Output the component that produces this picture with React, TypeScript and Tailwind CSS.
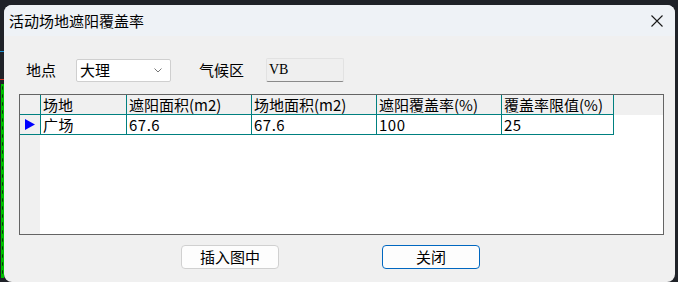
const columns = [
    { w: 'w-[86px]', head: '场地', val: '广场' },
    { w: 'w-[125px]', head: '遮阳面积(m2)', val: '67.6' },
    { w: 'w-[125px]', head: '场地面积(m2)', val: '67.6' },
    { w: 'w-[125px]', head: '遮阳覆盖率(%)', val: '100' },
    { w: 'w-[112px]', head: '覆盖率限值(%)', val: '25' },
]

const App: React.FC = () => {
    return (
        <div className="w-[678px] h-[282px] overflow-hidden bg-[#1f2228] flex font-['Noto_Sans_CJK_SC',sans-serif] text-black">
            {/* desktop behind the dialog */}
            <div className="w-[4px] flex flex-col">
                <div className="h-[51px]" />
                <div className="h-[1px] bg-[#1e8fd0]" />
                <div className="h-[27px]" />
                <div className="h-[1px] bg-[#d23a2a]" />
                <div className="h-[4px]" />
                <div className="ml-[1px] h-[194px] bg-[#00c000] bg-[radial-gradient(#0a3a0a_0.5px,transparent_0.7px)] bg-[length:3px_8px]" />
            </div>

            <div className="mt-[5px] w-[671px] h-[277px] rounded-lg overflow-hidden bg-[#f0f0f0] flex flex-col">
                <div className="h-[31px] bg-[#eef2f6] flex items-center justify-between pl-[5px] pr-[12px]">
                    <span className="text-[15px] leading-[20px]">活动场地遮阳覆盖率</span>
                    <svg width="12" height="12" viewBox="0 0 12 12" className="mt-[1px]">
                        <path d="M0.5 0.5 L11.5 11.5 M11.5 0.5 L0.5 11.5" stroke="#1a1a1a" strokeWidth="1.1" />
                    </svg>
                </div>

                <div className="flex items-center pl-[22px] mt-[22px] h-[24px]">
                    <span className="w-[50px] text-[15px] leading-[20px]">地点</span>
                    <div className="w-[95px] h-[23px] bg-white border border-[#cfcfcf] rounded-[2px] flex items-center justify-between pl-[3px] pr-[8px]">
                        <span className="text-[15px] leading-[20px]">大理</span>
                        <svg width="8" height="5" viewBox="0 0 8 5">
                            <path d="M0.5 0.5 L4 4 L7.5 0.5" stroke="#777" strokeWidth="1" fill="none" />
                        </svg>
                    </div>
                    <span className="ml-[28px] w-[67px] text-[15px] leading-[20px]">气候区</span>
                    <div className="w-[78px] h-[24px] bg-[#efefef] border border-[#e2e2e2] border-b-[#8a8a8a] rounded-[2px] flex items-center pl-[2px]">
                        <span className="text-[14px] leading-[18px] font-['Liberation_Serif',serif]">VB</span>
                    </div>
                </div>

                <div className="ml-[15px] mt-[12px] w-[645px] h-[141px] border border-[#646464] bg-white flex flex-col">
                    <div className="flex h-[20px] bg-[#f0f0f0]">
                        <div className="w-[21px] border-r border-b border-[#008080]" />
                        {columns.map(c => (
                            <div key={c.head} className={`${c.w} border-r border-b border-[#008080] pl-[2px] text-[15px] leading-[19px] whitespace-nowrap overflow-hidden`}>
                                {c.head}
                            </div>
                        ))}
                    </div>
                    <div className="flex h-[20px]">
                        <div className="w-[21px] bg-[#f0f0f0] border-r border-b border-[#008080] flex items-center pl-[5px]">
                            <svg width="10" height="11" viewBox="0 0 10 11">
                                <path d="M0 0 L10 5.5 L0 11 Z" fill="#0000ff" />
                            </svg>
                        </div>
                        {columns.map(c => (
                            <div key={c.head} className={`${c.w} border-r border-b border-[#008080] pl-[2px] text-[15px] leading-[19px] tracking-[0.5px] whitespace-nowrap`}>
                                {c.val}
                            </div>
                        ))}
                    </div>
                    <div className="flex-1 flex">
                        <div className="w-[20px] bg-[#f0f0f0]" />
                    </div>
                </div>

                <div className="flex mt-[10px] pl-[177px] gap-[103px]">
                    <button className="w-[98px] h-[24px] bg-[#fdfdfd] border border-[#d0d0d0] rounded-[4px] text-[15px] leading-[20px]">插入图中</button>
                    <button className="w-[98px] h-[24px] bg-[#fdfdfd] border border-[#0067c0] rounded-[4px] text-[15px] leading-[20px]">关闭</button>
                </div>
            </div>
        </div>
    )
}

export default App
